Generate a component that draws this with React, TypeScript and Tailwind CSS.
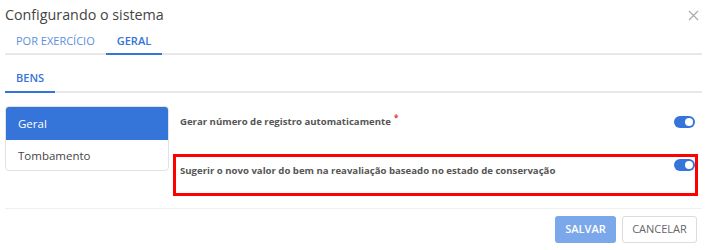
const Toggle: React.FC = () => (
  <div className="w-[21px] h-[12px] rounded-full bg-[#3574d8] flex items-center justify-end pr-[2px]">
    <div className="w-[8px] h-[8px] rounded-full bg-white" />
  </div>
);

export default function App() {
  return (
    <div className="w-[707px] h-[250px] bg-white overflow-hidden font-['Open_Sans',sans-serif] text-[#333]">
      <div className="flex items-center justify-between pl-[5px] pr-[8px] h-[30px]">
        <h1 className="text-[14.3px] text-[#444] leading-none">Configurando o sistema</h1>
        <svg width="11" height="11" viewBox="0 0 11 11" className="mt-[1px]">
          <path d="M1 1L10 10M10 1L1 10" stroke="#aaa" strokeWidth="1.2" />
        </svg>
      </div>

      <div className="mx-[5px] flex border-b-2 border-[#e8e8e8] h-[25px] text-[11px]">
        <div className="px-[11px] flex items-center text-[#5b8fe0] font-medium">POR EXERCÍCIO</div>
        <div className="px-[11px] flex items-center text-[#3574d8] font-semibold border-b-2 border-[#3574d8] -mb-[2px]">
          GERAL
        </div>
      </div>

      <div className="mx-[5px] mt-[11px] flex border-b-2 border-[#e8e8e8] h-[27px] text-[11px]">
        <div className="px-[11px] flex items-center text-[#3574d8] font-semibold border-b-2 border-[#3574d8] -mb-[2px]">
          BENS
        </div>
      </div>

      <div className="flex mt-[13px] pl-[5px] pr-[9px] gap-[4px]">
        <div className="w-[164px] h-[65px] border border-[#e2e2e2] rounded-[4px] overflow-hidden text-[11.5px] shrink-0">
          <div className="h-[33px] bg-[#3574d8] text-white flex items-center pl-[12px]">Geral</div>
          <div className="h-[32px] flex items-center pl-[12px] text-[#444]">Tombamento</div>
        </div>
        <div className="flex-1 flex flex-col text-[9.6px] font-bold text-[#555]">
          <div className="h-[48px] flex items-start justify-between pl-[7px] pr-[3px] pt-[10px]">
            <span className="mt-[-1px]">
              Gerar número de registro automaticamente
              <span className="text-[#e53935] text-[8px] relative -top-[4px] ml-[3px]">*</span>
            </span>
            <Toggle />
          </div>
          <div className="h-[42px] border-[3px] border-[#ff0000] flex items-start justify-between pl-[4px] pr-[0px]">
            <span className="mt-[7px]">Sugerir o novo valor do bem na reavaliação baseado no estado de conservação</span>
            <div className="mt-[2px]">
              <Toggle />
            </div>
          </div>
        </div>
      </div>

      <div className="mx-[5px] mt-[12px] border-t border-[#f0f0f0] flex justify-end gap-[6px] pt-[7px] pr-[5px]">
        <button className="w-[61px] h-[27px] rounded-[3px] bg-[#7ba7eb] text-white text-[11px] font-semibold">SALVAR</button>
        <button className="w-[75px] h-[27px] rounded-[3px] border border-[#dcdcdc] text-[#666] text-[11px]">CANCELAR</button>
      </div>
    </div>
  );
}
